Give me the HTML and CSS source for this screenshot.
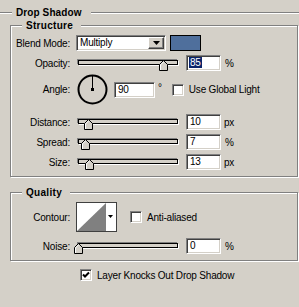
FILE: index.html
```html
<!DOCTYPE html>
<html lang="en">
<head>
  <meta charset="UTF-8">
  <meta name="viewport" content="width=device-width, initial-scale=1.0">
  <title>Layer Style - Drop Shadow</title>
  <link rel="stylesheet" href="styles.css">
</head>
<body>
  <div class="group group-outer">
    <div class="group-title title-outer">Drop Shadow</div>

    <div class="group group-inner">
      <div class="group-title">Structure</div>

      <div class="row row-first">
        <span class="lbl">Blend Mode:</span>
        <div class="combo sunken">
          <span class="combo-text">Multiply</span>
          <span class="combo-btn">
            <svg width="7" height="4" viewBox="0 0 7 4"><polygon points="0,0 7,0 3.5,4" fill="#000"/></svg>
          </span>
        </div>
        <span class="swatch"></span>
      </div>

      <div class="row">
        <span class="lbl">Opacity:</span>
        <div class="slider">
          <div class="track"></div>
          <svg class="thumb" style="left:85%" width="9" height="11" viewBox="0 0 9 11"><path d="M4.5 0.5 L8.5 4.5 V10.5 H0.5 V4.5 Z" fill="#d4d0c8" stroke="#000"/><path d="M1.5 10 V4.9 L4.5 1.9" fill="none" stroke="#fff"/></svg>
        </div>
        <span class="field sunken"><span class="sel">85</span></span>
        <span class="unit">%</span>
      </div>

      <div class="row row-angle">
        <span class="lbl">Angle:</span>
        <svg class="dial" width="31" height="31" viewBox="0 0 31 31">
          <circle cx="15.5" cy="15.5" r="14" fill="none" stroke="#000" stroke-width="2"/>
          <line x1="15.5" y1="15.5" x2="15.5" y2="2" stroke="#000"/>
          <rect x="14" y="14" width="3" height="3" fill="#000"/>
        </svg>
        <span class="field field-angle sunken">90</span>
        <span class="deg">°</span>
        <span class="check sunken check-global"></span>
        <span class="check-label">Use Global Light</span>
      </div>

      <div class="row row-distance">
        <span class="lbl">Distance:</span>
        <div class="slider">
          <div class="track"></div>
          <svg class="thumb" style="left:10%" width="9" height="11" viewBox="0 0 9 11"><path d="M4.5 0.5 L8.5 4.5 V10.5 H0.5 V4.5 Z" fill="#d4d0c8" stroke="#000"/><path d="M1.5 10 V4.9 L4.5 1.9" fill="none" stroke="#fff"/></svg>
        </div>
        <span class="field sunken">10</span>
        <span class="unit unit-px">px</span>
      </div>

      <div class="row">
        <span class="lbl">Spread:</span>
        <div class="slider">
          <div class="track"></div>
          <svg class="thumb" style="left:7%" width="9" height="11" viewBox="0 0 9 11"><path d="M4.5 0.5 L8.5 4.5 V10.5 H0.5 V4.5 Z" fill="#d4d0c8" stroke="#000"/><path d="M1.5 10 V4.9 L4.5 1.9" fill="none" stroke="#fff"/></svg>
        </div>
        <span class="field sunken">7</span>
        <span class="unit">%</span>
      </div>

      <div class="row">
        <span class="lbl">Size:</span>
        <div class="slider">
          <div class="track"></div>
          <svg class="thumb" style="left:11%" width="9" height="11" viewBox="0 0 9 11"><path d="M4.5 0.5 L8.5 4.5 V10.5 H0.5 V4.5 Z" fill="#d4d0c8" stroke="#000"/><path d="M1.5 10 V4.9 L4.5 1.9" fill="none" stroke="#fff"/></svg>
        </div>
        <span class="field sunken">13</span>
        <span class="unit unit-px">px</span>
      </div>
    </div>

    <div class="group group-inner group-quality">
      <div class="group-title">Quality</div>

      <div class="row row-first row-contour">
        <span class="lbl">Contour:</span>
        <svg class="contour" width="41" height="30" viewBox="0 0 41 30">
          <rect x="0.5" y="0.5" width="40" height="29" fill="#fff" stroke="#404040"/>
          <polygon points="1,29 30,1 30,29" fill="#808080"/>
          <polygon points="32,13 37,13 34.5,16" fill="#000"/>
        </svg>
        <span class="check sunken check-aa"></span>
        <span class="check-label">Anti-aliased</span>
      </div>

      <div class="row row-noise">
        <span class="lbl">Noise:</span>
        <div class="slider">
          <div class="track"></div>
          <svg class="thumb" style="left:0%" width="9" height="11" viewBox="0 0 9 11"><path d="M4.5 0.5 L8.5 4.5 V10.5 H0.5 V4.5 Z" fill="#d4d0c8" stroke="#000"/><path d="M1.5 10 V4.9 L4.5 1.9" fill="none" stroke="#fff"/></svg>
        </div>
        <span class="field sunken">0</span>
        <span class="unit">%</span>
      </div>
    </div>

    <div class="knock">
      <span class="check sunken">
        <svg width="8" height="8" viewBox="0 0 8 8"><path d="M1 3.5 L3 5.5 L7 1.5" fill="none" stroke="#000" stroke-width="2"/></svg>
      </span>
      <span class="check-label">Layer Knocks Out Drop Shadow</span>
    </div>
  </div>
</body>
</html>
```

FILE: styles.css
```css
html, body {
  margin: 0;
  padding: 0;
  overflow: hidden;
}
body {
  background: #d4d0c8;
  color: #000;
  font-family: 'Liberation Sans', Arial, sans-serif;
  font-size: 10px;
  line-height: 13px;
  letter-spacing: -0.2px;
}

/* etched group boxes */
.group {
  border: 1px solid #808080;
  box-shadow: inset 1px 1px 0 #fff, 1px 1px 0 #fff;
}
.group-outer {
  margin: 12px -4px 0;
  padding: 0 4px 40px 13px;
}
.group-inner {
  margin-top: 6px;
  padding: 0 0 6px 0;
}
.group-quality { margin-top: 15px; }
.group-title {
  width: fit-content;
  margin: -7px 0 0 11px;
  padding: 0 8px 0 4px;
  height: 13px;
  background: #d4d0c8;
  font-weight: bold;
  letter-spacing: 0.3px;
}
.title-outer { margin-left: 2px; padding-right: 9px; letter-spacing: 0.1px; }

/* rows */
.row {
  display: flex;
  align-items: center;
  height: 16px;
  margin-top: 4px;
}
.row-first { margin-top: 3px; }
.row-angle { height: 31px; margin-top: 3px; }
.row-distance { margin-top: 9px; }
.row-contour { height: 30px; }
.row-noise { margin-top: 6px; }
.lbl {
  width: 59px;
  margin-right: 6px;
  text-align: right;
  flex: none;
}

/* sunken 3d border */
.sunken {
  box-sizing: border-box;
  border: 1px solid;
  border-color: #808080 #fff #fff #808080;
  box-shadow: inset 1px 1px 0 #404040, inset -1px -1px 0 #d4d0c8;
  background: #fff;
}

.combo {
  display: flex;
  width: 90px;
  height: 16px;
  padding: 1px;
}
.combo-text { flex: 1; padding-left: 2px; line-height: 12px; }
.combo-btn {
  box-sizing: border-box;
  width: 16px;
  height: 12px;
  display: flex;
  align-items: center;
  justify-content: center;
  background: #d4d0c8;
  border: 1px solid;
  border-color: #fff #404040 #404040 #fff;
  box-shadow: inset -1px -1px 0 #808080;
}
.swatch {
  box-sizing: border-box;
  width: 31px;
  height: 16px;
  margin-left: 4px;
  background: #4f6f9c;
  border: 1px solid #000;
}

/* sliders */
.slider {
  position: relative;
  width: 100px;
  height: 16px;
  margin-left: 2px;
  flex: none;
}
.track {
  box-sizing: border-box;
  margin-top: 5px;
  height: 5px;
  background: #d4d0c8;
  border: 1px solid #000;
  box-shadow: -1px -1px 0 #808080, 1px 1px 0 #fff;
}
.thumb {
  position: absolute;
  top: 5px;
  margin-left: -4px;
}

.field {
  width: 35px;
  height: 16px;
  margin-left: 8px;
  padding-left: 3px;
  line-height: 14px;
  flex: none;
}
.field-angle { width: 41px; margin-left: 6px; }
.sel { background: #0a246a; color: #fff; padding: 0 1px; margin-left: -1px; }
.unit { margin-left: 4px; }
.unit-px { margin-left: 3px; }
.deg { margin-left: 3px; margin-top: -4px; }

.check {
  display: flex;
  align-items: center;
  justify-content: center;
  width: 12px;
  height: 12px;
  flex: none;
}
.check-global { margin-left: 10px; }
.check-aa { margin-left: 13px; }
.check-label { margin-left: 5px; }

.dial { margin-left: 1px; flex: none; }
.contour { flex: none; }

.knock {
  display: flex;
  align-items: center;
  height: 12px;
  margin: 8px 0 0 70px;
}
```
